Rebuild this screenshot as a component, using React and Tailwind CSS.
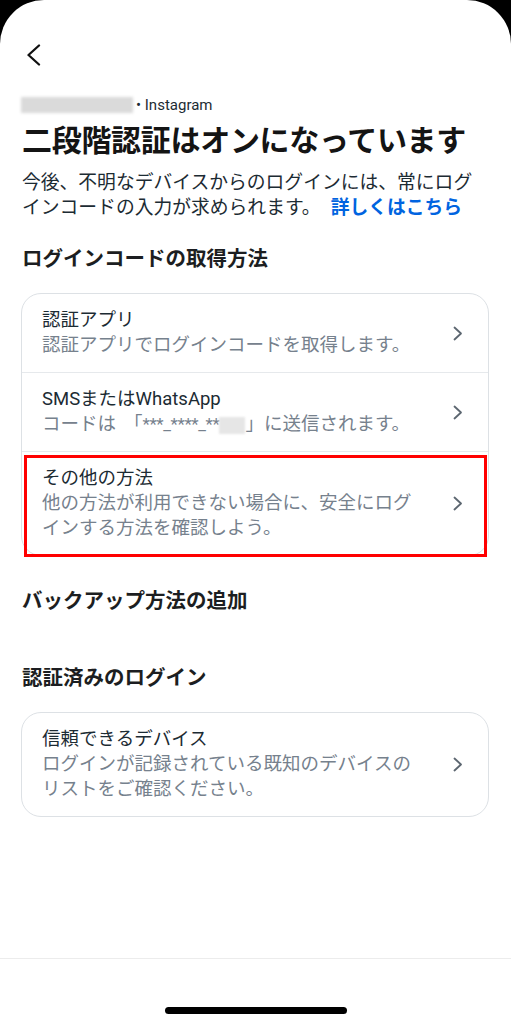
const font = { fontFamily: 'Roboto, "Noto Sans CJK JP", sans-serif' }

function Chevron() {
  return (
    <svg width="10" height="15" viewBox="0 0 10 15" fill="none">
      <path d="M1.5 1.5 L8 7.5 L1.5 13.5" stroke="#5c6670" strokeWidth="1.8" strokeLinecap="round" strokeLinejoin="round" />
    </svg>
  )
}

function Row({ title, children, highlight, last }) {
  return (
    <div className={`relative flex items-center pl-[20px] pr-[25px] py-[14px] ${last ? '' : 'border-b border-[#e6e9ec]'}`}>
      <div className="flex-1 min-w-0">
        <div className="text-[18.5px] leading-[25px] text-[#1c2b33]">{title}</div>
        <div className="text-[18.5px] leading-[25px] text-[#76818d] w-[382px]">{children}</div>
      </div>
      <div className="w-[38px] flex justify-end">
        <Chevron />
      </div>
      {highlight && <div className="absolute top-[3px] -bottom-[2px] left-[2px] right-[1px] border-[3px] border-[#ff0000]" />}
    </div>
  )
}

function SectionTitle({ children, className }) {
  return <h2 className={`text-[20.5px] leading-[28px] font-semibold text-[#1c1e21] ${className}`}>{children}</h2>
}

export default function App() {
  return (
    <div className="w-full h-[1024px] bg-black overflow-hidden [text-spacing-trim:space-all]" style={font}>
      <div className="bg-white rounded-t-[44px] h-full flex flex-col">
        <div className="h-[95px] pt-[44px] pl-[26px]">
          <svg width="15" height="22" viewBox="0 0 15 22" fill="none">
            <path d="M13 1.5 L2.5 11 L13 20.5" stroke="#111" strokeWidth="2.3" strokeLinecap="round" strokeLinejoin="round" />
          </svg>
        </div>

        <div className="px-[22px]">
          <div className="h-[20px] flex items-center gap-[3px] text-[15px] text-[#1c2b33]">
            <span className="inline-block w-[112px] h-[16px] -ml-[1px] bg-[#dadada] blur-[1.5px]" />
            <span>• Instagram</span>
          </div>

          <h1 className="mt-[6px] text-[30px] leading-[40px] font-semibold text-[#141414] tracking-[-0.3px]">二段階認証はオンになっています</h1>

          <p className="mt-[10px] text-[18.8px] leading-[25px] text-[#1c2b33]">
            今後、不明なデバイスからのログインには、常にログインコードの入力が求められます。<span className="ml-[10px] font-bold text-[#0064e0]">詳しくはこちら</span>
          </p>

          <SectionTitle className="mt-[24px]">ログインコードの取得方法</SectionTitle>

          <div className="mt-[20px] -ml-[1px] border border-[#dde1e5] rounded-[20px]">
            <Row title="認証アプリ">認証アプリでログインコードを取得します。</Row>
            <Row title="SMSまたはWhatsApp">
              コードは<span className="ml-[8px]">「</span><span className="text-[17px] tracking-[-0.4px]">***_****_**</span>
              <span className="inline-block align-middle w-[26px] h-[17px] bg-[#e6e6e6] blur-[1px]" />」に送信されます。
            </Row>
            <Row title="その他の方法" highlight last>
              他の方法が利用できない場合に、安全にログインする方法を確認しよう。
            </Row>
          </div>

          <SectionTitle className="mt-[31px]">バックアップ方法の追加</SectionTitle>

          <SectionTitle className="mt-[49px]">認証済みのログイン</SectionTitle>

          <div className="mt-[20px] -ml-[1px] border border-[#dde1e5] rounded-[20px]">
            <Row title="信頼できるデバイス" last>
              ログインが記録されている既知のデバイスのリストをご確認ください。
            </Row>
          </div>
        </div>

        <div className="flex-1" />

        <div className="h-[66px] border-t border-[#ececec] flex justify-center pt-[48px]">
          <div className="w-[182px] h-[7px] rounded-full bg-black" />
        </div>
      </div>
    </div>
  )
}
